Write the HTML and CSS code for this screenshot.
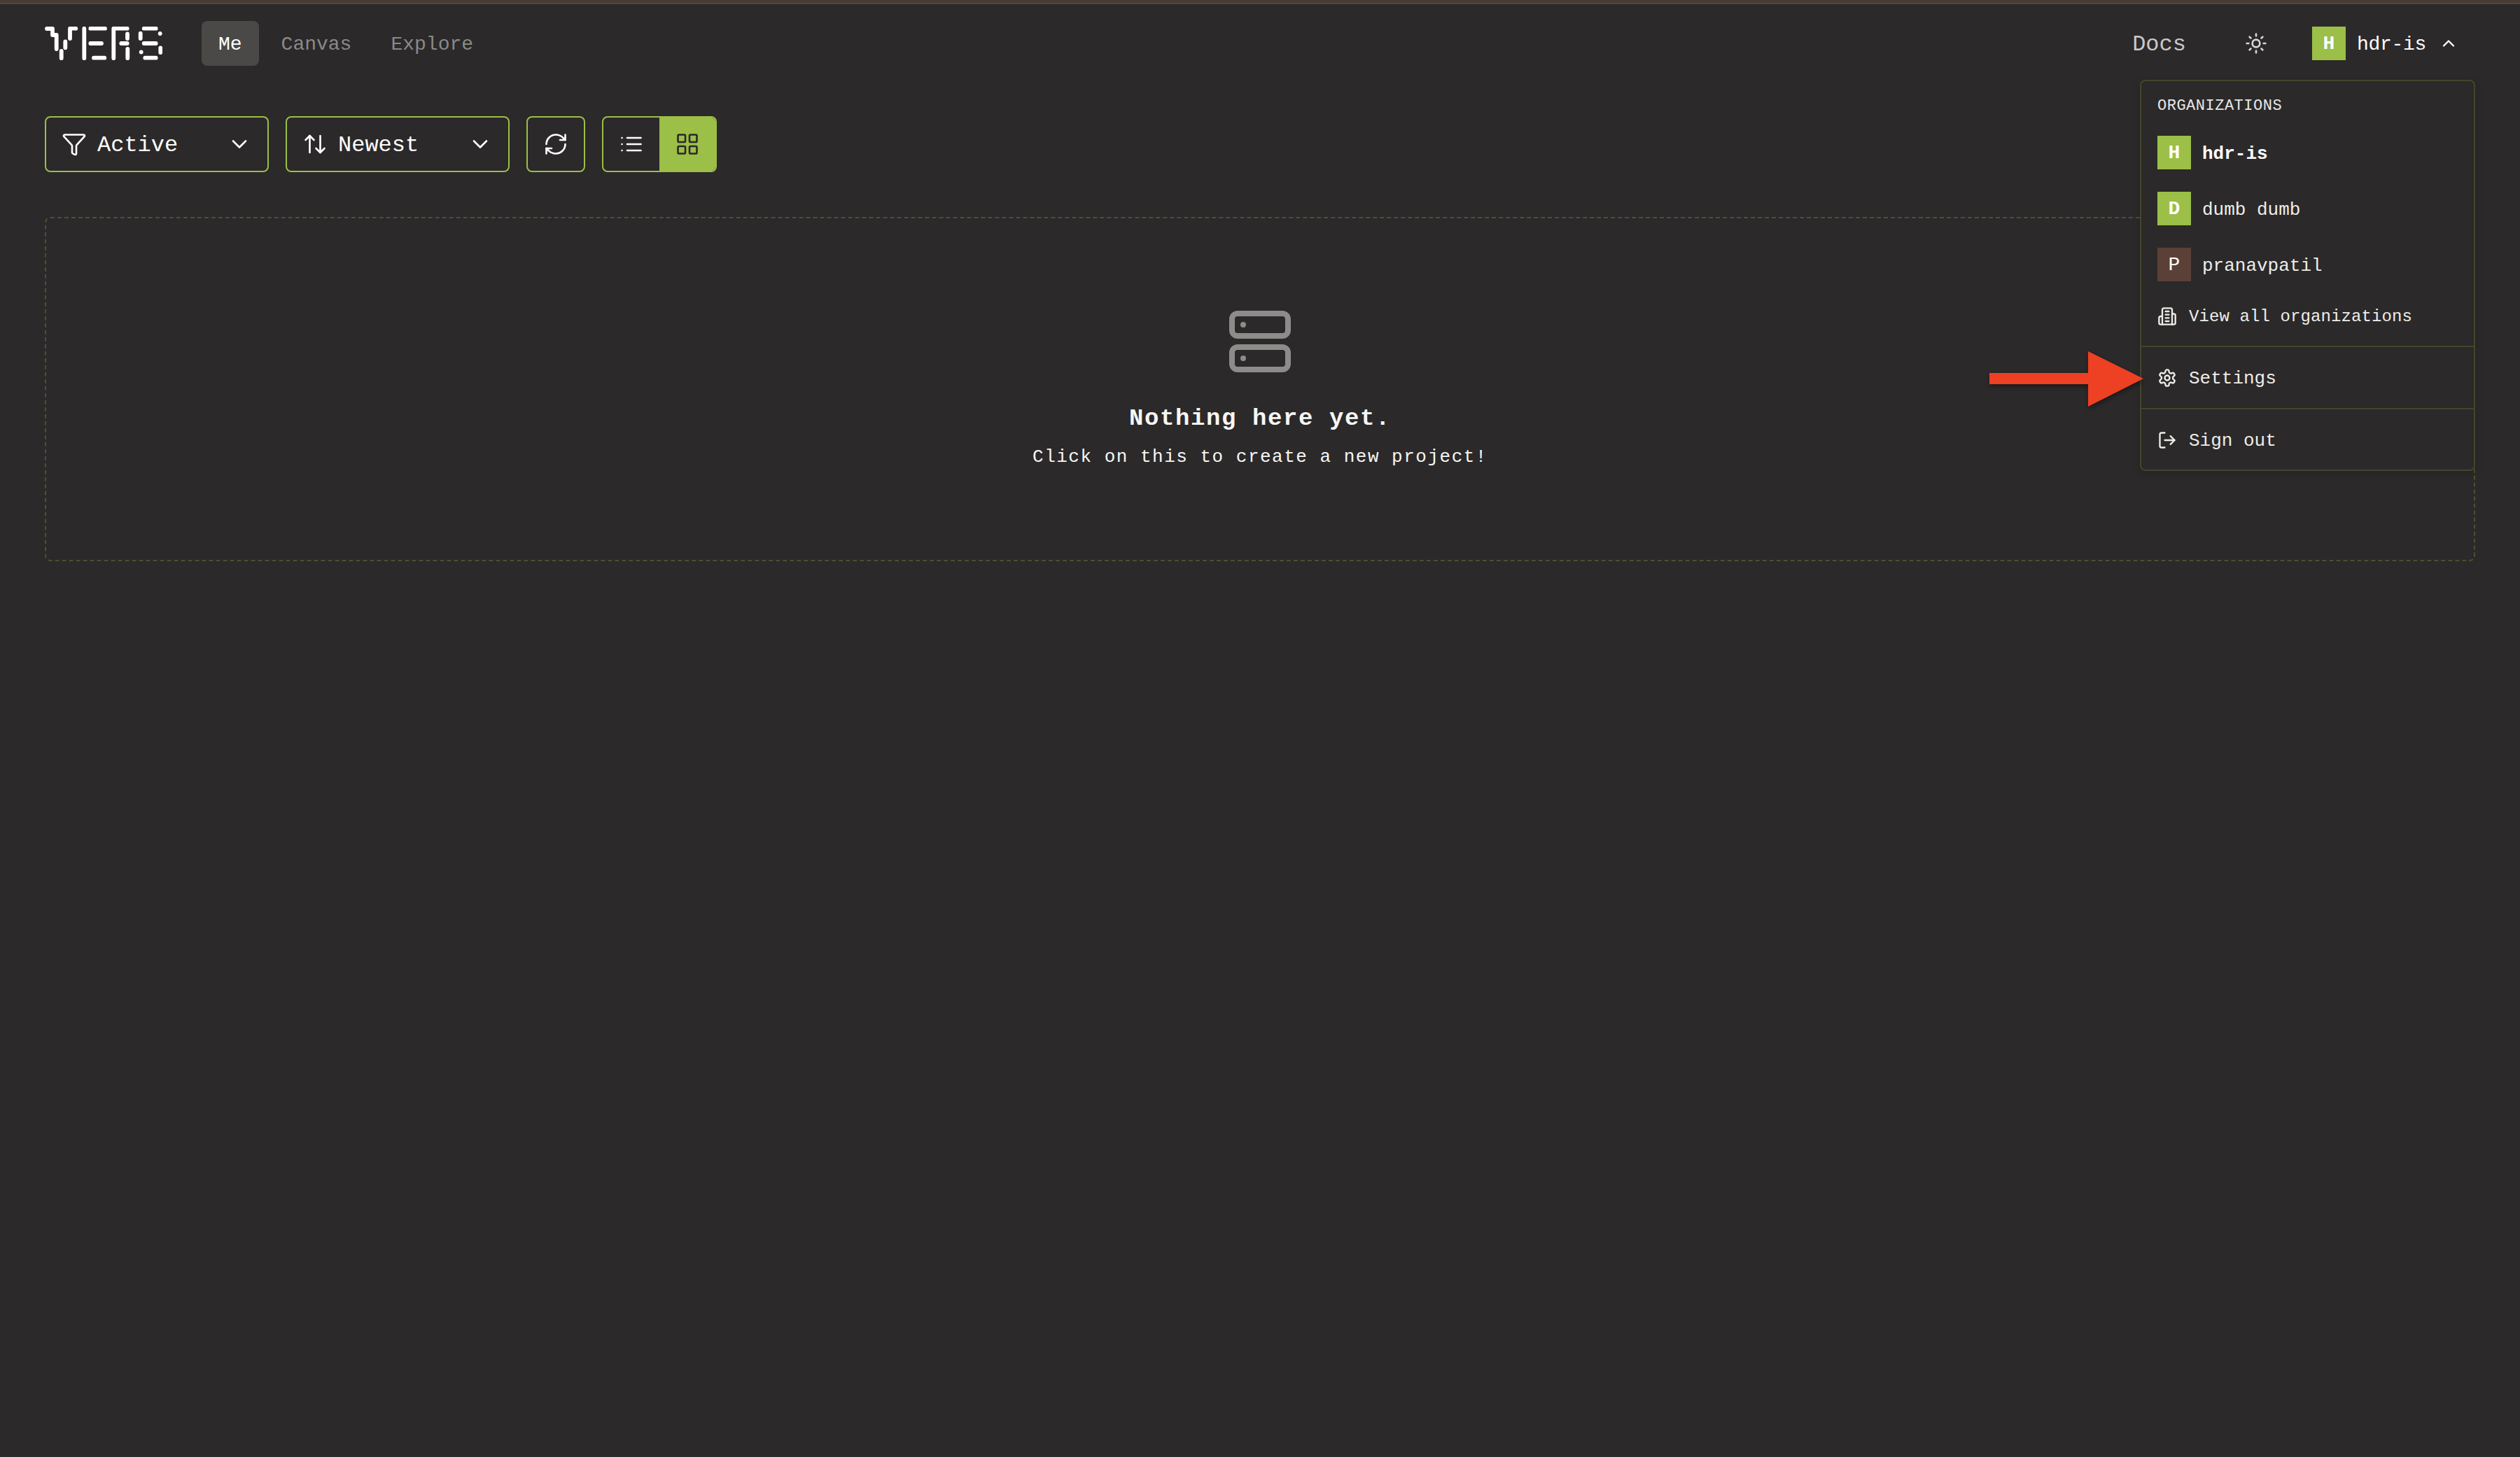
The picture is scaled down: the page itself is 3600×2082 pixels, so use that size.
FILE: index.html
```html
<!DOCTYPE html>
<html lang="en">
<head>
  <meta charset="UTF-8" />
  <title>Vers</title>
  <link rel="stylesheet" href="styles.css">
</head>
<body>

<div class="top-strip"></div>

<header class="header">
  <svg class="logo" viewBox="0 0 168 48" fill="none" stroke="#fff" stroke-width="5.8" stroke-linecap="round" stroke-linejoin="round" aria-label="Vers">
    <path d="M3 3H11V12H16.7V32M23.7 35V45.3M44.3 2.7H36V17M29.3 21.3V30.3"/>
    <path d="M56.3 2.7V45.3M65.3 2.7H86M65.3 24H81M70 44.7H85.3"/>
    <path d="M98.3 45.3V2.7H117.7M118 10.3V17M109.3 24H117.7M118.3 32V45.3"/>
    <path d="M141.7 2.7H158.7M164.7 10V10.1M136.7 9.7V17M141.7 24H158.7M137.7 36.3V36.4M165.3 30.3V37M143.3 44.7H158.7"/>
  </svg>
  <nav class="nav">
    <a class="nav-link active">Me</a>
    <a class="nav-link">Canvas</a>
    <a class="nav-link">Explore</a>
  </nav>
  <div class="header-right">
    <a class="docs">Docs</a>
    <svg class="sun" viewBox="0 0 24 24" fill="none" stroke="currentColor" stroke-width="2" stroke-linecap="round" stroke-linejoin="round">
      <circle cx="12" cy="12" r="4"/><path d="M12 2v2"/><path d="M12 20v2"/><path d="m4.93 4.93 1.41 1.41"/><path d="m17.66 17.66 1.41 1.41"/><path d="M2 12h2"/><path d="M20 12h2"/><path d="m6.34 17.66-1.41 1.41"/><path d="m19.07 4.93-1.41 1.41"/>
    </svg>
    <div class="user">
      <span class="avatar green">H</span>
      <span class="user-name">hdr-is</span>
      <svg class="user-chevron" viewBox="0 0 24 24" fill="none" stroke="currentColor" stroke-width="2" stroke-linecap="round" stroke-linejoin="round"><path d="m18 15-6-6-6 6"/></svg>
    </div>
  </div>
</header>

<main class="main">
  <div class="toolbar">
    <button class="select">
      <svg class="icon" viewBox="0 0 24 24" fill="none" stroke="currentColor" stroke-width="1.75" stroke-linecap="round" stroke-linejoin="round"><path d="M10 20a1 1 0 0 0 .553.895l2 1A1 1 0 0 0 14 21v-7a2 2 0 0 1 .517-1.341L21.74 4.67A1 1 0 0 0 21 3H3a1 1 0 0 0-.742 1.67l7.225 7.989A2 2 0 0 1 10 14z"/></svg>
      <span class="select-text">Active</span>
      <svg class="icon select-chevron" viewBox="0 0 24 24" fill="none" stroke="currentColor" stroke-width="1.75" stroke-linecap="round" stroke-linejoin="round"><path d="m6 9 6 6 6-6"/></svg>
    </button>
    <button class="select">
      <svg class="icon" viewBox="0 0 24 24" fill="none" stroke="currentColor" stroke-width="1.75" stroke-linecap="round" stroke-linejoin="round"><path d="m21 16-4 4-4-4"/><path d="M17 20V4"/><path d="m3 8 4-4 4 4"/><path d="M7 4v16"/></svg>
      <span class="select-text">Newest</span>
      <svg class="icon select-chevron" viewBox="0 0 24 24" fill="none" stroke="currentColor" stroke-width="1.75" stroke-linecap="round" stroke-linejoin="round"><path d="m6 9 6 6 6-6"/></svg>
    </button>
    <button class="refresh">
      <svg class="icon" viewBox="0 0 24 24" fill="none" stroke="currentColor" stroke-width="1.75" stroke-linecap="round" stroke-linejoin="round"><path d="M3 12a9 9 0 0 1 9-9 9.75 9.75 0 0 1 6.74 2.74L21 8"/><path d="M21 3v5h-5"/><path d="M21 12a9 9 0 0 1-9 9 9.75 9.75 0 0 1-6.74-2.74L3 16"/><path d="M8 16H3v5"/></svg>
    </button>
    <div class="view-toggle">
      <span class="view-btn">
        <svg class="icon" viewBox="0 0 24 24" fill="none" stroke="currentColor" stroke-width="1.75" stroke-linecap="round" stroke-linejoin="round"><path d="M3 12h.01"/><path d="M3 18h.01"/><path d="M3 6h.01"/><path d="M8 12h13"/><path d="M8 18h13"/><path d="M8 6h13"/></svg>
      </span>
      <span class="view-btn selected">
        <svg class="icon" viewBox="0 0 24 24" fill="none" stroke="currentColor" stroke-width="1.75" stroke-linecap="round" stroke-linejoin="round"><rect width="7" height="7" x="3" y="3" rx="1"/><rect width="7" height="7" x="14" y="3" rx="1"/><rect width="7" height="7" x="14" y="14" rx="1"/><rect width="7" height="7" x="3" y="14" rx="1"/></svg>
      </span>
    </div>
  </div>

  <section class="empty">
    <svg class="empty-icon" viewBox="0 0 24 24" fill="none" stroke="currentColor" stroke-width="2" stroke-linecap="round" stroke-linejoin="round"><rect width="20" height="8" x="2" y="2" rx="2" ry="2"/><rect width="20" height="8" x="2" y="14" rx="2" ry="2"/><line x1="6" x2="6.01" y1="6" y2="6"/><line x1="6" x2="6.01" y1="18" y2="18"/></svg>
    <h2 class="empty-title">Nothing here yet.</h2>
    <p class="empty-text">Click on this to create a new project!</p>
  </section>
</main>

<div class="dropdown">
  <div class="dropdown-orgs">
    <div class="dropdown-label">ORGANIZATIONS</div>
    <div class="org"><span class="avatar green">H</span><span class="org-name current">hdr-is</span></div>
    <div class="org"><span class="avatar green">D</span><span class="org-name">dumb dumb</span></div>
    <div class="org"><span class="avatar brown">P</span><span class="org-name">pranavpatil</span></div>
    <div class="menu-item view-all">
      <svg class="menu-icon" viewBox="0 0 24 24" fill="none" stroke="currentColor" stroke-width="2" stroke-linecap="round" stroke-linejoin="round"><path d="M6 22V4a2 2 0 0 1 2-2h8a2 2 0 0 1 2 2v18Z"/><path d="M6 12H4a2 2 0 0 0-2 2v6a2 2 0 0 0 2 2h2"/><path d="M18 9h2a2 2 0 0 1 2 2v9a2 2 0 0 1-2 2h-2"/><path d="M10 6h4"/><path d="M10 10h4"/><path d="M10 14h4"/><path d="M10 18h4"/></svg>
      <span>View all organizations</span>
    </div>
  </div>
  <div class="menu-row">
    <div class="menu-item">
      <svg class="menu-icon" viewBox="0 0 24 24" fill="none" stroke="currentColor" stroke-width="2" stroke-linecap="round" stroke-linejoin="round"><path d="M12.22 2h-.44a2 2 0 0 0-2 2v.18a2 2 0 0 1-1 1.73l-.43.25a2 2 0 0 1-2 0l-.15-.08a2 2 0 0 0-2.73.73l-.22.38a2 2 0 0 0 .73 2.73l.15.1a2 2 0 0 1 1 1.72v.51a2 2 0 0 1-1 1.74l-.15.09a2 2 0 0 0-.73 2.73l.22.38a2 2 0 0 0 2.73.73l.15-.08a2 2 0 0 1 2 0l.43.25a2 2 0 0 1 1 1.73V20a2 2 0 0 0 2 2h.44a2 2 0 0 0 2-2v-.18a2 2 0 0 1 1-1.73l.43-.25a2 2 0 0 1 2 0l.15.08a2 2 0 0 0 2.73-.73l.22-.39a2 2 0 0 0-.73-2.73l-.15-.08a2 2 0 0 1-1-1.74v-.5a2 2 0 0 1 1-1.74l.15-.09a2 2 0 0 0 .73-2.73l-.22-.38a2 2 0 0 0-2.73-.73l-.15.08a2 2 0 0 1-2 0l-.43-.25a2 2 0 0 1-1-1.73V4a2 2 0 0 0-2-2z"/><circle cx="12" cy="12" r="3"/></svg>
      <span class="menu-text">Settings</span>
    </div>
  </div>
  <div class="menu-row">
    <div class="menu-item">
      <svg class="menu-icon" viewBox="0 0 24 24" fill="none" stroke="currentColor" stroke-width="2" stroke-linecap="round" stroke-linejoin="round"><path d="M9 21H5a2 2 0 0 1-2-2V5a2 2 0 0 1 2-2h4"/><path d="m16 17 5-5-5-5"/><path d="M21 12H9"/></svg>
      <span class="menu-text">Sign out</span>
    </div>
  </div>
</div>

<svg class="callout" viewBox="0 0 220 79" fill="#ee4023"><path d="M0 31H141V0L220 39L141 79V47H0Z"/></svg>

</body>
</html>
```

FILE: styles.css
```css
* { box-sizing: border-box; }

body {
  margin: 0;
  min-height: 100vh;
  background: #2b292a;
  color: #fff;
  font-family: "Liberation Mono", monospace;
}

.top-strip {
  height: 6px;
  background: #4a3c34;
  border-bottom: 2px solid #484848;
}

.header {
  display: flex;
  align-items: center;
  height: 64px;
  margin-top: 24px;
  padding: 0 64px;
}

.logo {
  width: 168px;
  height: 48px;
}

.nav {
  display: flex;
  gap: 8px;
  margin-left: 56px;
}

.nav-link {
  display: flex;
  align-items: center;
  height: 64px;
  padding: 2px 24px 0;
  border-radius: 8px;
  font-size: 28px;
  color: #8a8987;
}

.nav-link.active {
  background: #4a4947;
  color: #fff;
}

.header-right {
  display: flex;
  align-items: center;
  margin-left: auto;
  padding-right: 24px;
}

.docs {
  padding-top: 2px;
  font-size: 32px;
  color: #c9c8c6;
}

.sun {
  width: 32px;
  height: 32px;
  margin: 0 64px 0 84px;
  color: #d8d7d5;
}

.user {
  display: flex;
  align-items: center;
  gap: 16px;
}

.user-name {
  padding-top: 2px;
  font-size: 28px;
  letter-spacing: -0.3px;
}

.user-chevron {
  width: 28px;
  height: 28px;
  margin-left: 2px;
}

.avatar {
  display: flex;
  align-items: center;
  justify-content: center;
  width: 48px;
  height: 48px;
  font-size: 28px;
  font-weight: bold;
}

.avatar.green { background: #9bbf47; }

.avatar.brown {
  background: #5b4038;
  font-weight: normal;
}

.main { padding: 0 64px; }

.toolbar {
  display: flex;
  gap: 24px;
  margin-top: 72px;
}

.select,
.refresh,
.view-toggle {
  display: flex;
  align-items: center;
  height: 80px;
  background: none;
  border: 2px solid #9bbf47;
  border-radius: 8px;
  color: #fff;
  font-family: inherit;
}

.select {
  width: 320px;
  gap: 15px;
  padding: 0 22px;
  font-size: 32px;
}

.select-text { padding-top: 2px; }

.select-chevron { margin-left: auto; }

.refresh {
  justify-content: center;
  width: 84px;
  padding: 0;
}

.icon {
  width: 36px;
  height: 36px;
  flex-shrink: 0;
}

.view-toggle {
  width: 164px;
  overflow: hidden;
}

.view-btn {
  display: flex;
  align-items: center;
  justify-content: center;
  flex: 1;
  height: 100%;
}

.view-btn.selected {
  background: #9bbf47;
  color: #2a292a;
}

.empty {
  display: flex;
  flex-direction: column;
  align-items: center;
  height: 492px;
  margin-top: 64px;
  padding-top: 128px;
  border: 2px dashed #4d5030;
  border-radius: 8px;
}

.empty-icon {
  width: 96px;
  height: 96px;
  color: #8d8c8b;
}

.empty-title {
  margin: 40px 0 0;
  font-size: 34px;
  line-height: 44px;
  letter-spacing: 1.6px;
  color: #f7f6f3;
}

.empty-text {
  margin: 15px 0 0;
  font-size: 26px;
  line-height: 36px;
  letter-spacing: 1.5px;
  color: #f7f6f3;
}

.dropdown {
  position: absolute;
  top: 114px;
  right: 64px;
  width: 479px;
  height: 559px;
  background: #2b292a;
  border: 2px solid #43462b;
  border-radius: 8px;
  box-shadow: 0 4px 12px rgba(0, 0, 0, 0.15);
}

.dropdown-orgs {
  display: flex;
  flex-direction: column;
  gap: 32px;
  height: 378px;
  padding: 21px 23px 0;
}

.dropdown-label {
  margin-bottom: -3px;
  padding-top: 2px;
  font-size: 22px;
  line-height: 26px;
  letter-spacing: 0.5px;
  color: #e8e7e4;
}

.org {
  display: flex;
  align-items: center;
  gap: 16px;
}

.org-name {
  padding-top: 3px;
  font-size: 26px;
  color: #eeede9;
}

.org-name.current {
  font-weight: bold;
  color: #fff;
}

.menu-item {
  display: flex;
  align-items: center;
  gap: 17px;
  height: 32px;
  font-size: 24px;
  letter-spacing: 0.1px;
  color: #eeede9;
}

.menu-text {
  padding-top: 2px;
  font-size: 26px;
  letter-spacing: 0;
}

.view-all { margin-top: 2px; }

.menu-icon {
  width: 28px;
  height: 28px;
  flex-shrink: 0;
}

.menu-row {
  display: flex;
  align-items: center;
  height: 89px;
  padding: 0 23px;
  border-top: 2px solid #43462b;
}

.callout {
  position: absolute;
  top: 502px;
  left: 2842px;
  width: 220px;
  height: 79px;
  filter: drop-shadow(1px 3px 3px rgba(0, 0, 0, 0.4));
}
```
